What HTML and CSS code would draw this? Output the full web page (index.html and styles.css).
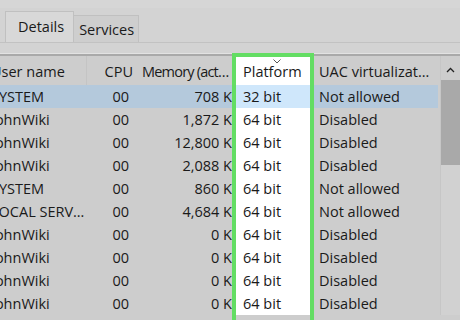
FILE: index.html
```html
<!DOCTYPE html>
<html lang="en">
<head>
    <meta charset="UTF-8">
    <title>Task Manager - Details</title>
    <link rel="stylesheet" href="styles.css">
</head>
<body>
    <div class="top">
        <div class="tabs">
            <div class="tab active">Details</div>
            <div class="tab">Services</div>
        </div>
    </div>
    <div class="list">
        <div class="grid" id="grid">
            <div class="cell head name">User name</div>
            <div class="cell head cpu">CPU</div>
            <div class="cell head mem">Memory (active private working set)</div>
            <div class="cell head plat">
                <svg class="sort" width="8" height="5" viewBox="0 0 8 5"><path d="M0.5 0.5 L4 4 L7.5 0.5" fill="none" stroke="#555" stroke-width="1"/></svg>
                Platform
            </div>
            <div class="cell head uac">UAC virtualization</div>
        </div>
        <div class="scrollbar">
            <div class="scroll-head">
                <svg width="9" height="6" viewBox="0 0 9 6"><path d="M1 5 L4.5 1.5 L8 5" fill="none" stroke="#222" stroke-width="1.3"/></svg>
            </div>
            <div class="thumb"></div>
        </div>
        <div class="highlight"></div>
    </div>

    <script>
        const rows = [
            ["SYSTEM", "00", "708 K", "32 bit", "Not allowed"],
            ["JohnWiki", "00", "1,872 K", "64 bit", "Disabled"],
            ["JohnWiki", "00", "12,800 K", "64 bit", "Disabled"],
            ["JohnWiki", "00", "2,088 K", "64 bit", "Disabled"],
            ["SYSTEM", "00", "860 K", "64 bit", "Not allowed"],
            ["LOCAL SERVICE", "00", "4,684 K", "64 bit", "Not allowed"],
            ["JohnWiki", "00", "0 K", "64 bit", "Disabled"],
            ["JohnWiki", "00", "0 K", "64 bit", "Disabled"],
            ["JohnWiki", "00", "0 K", "64 bit", "Disabled"],
            ["JohnWiki", "00", "0 K", "64 bit", "Disabled"]
        ];
        const cols = ["name", "cpu", "mem", "plat", "uac"];
        const grid = document.getElementById("grid");

        rows.forEach((row, i) => {
            row.forEach((text, c) => {
                let cell = document.createElement("div");
                cell.classList.add("cell", cols[c]);
                if (i === 0) cell.classList.add("selected");
                cell.textContent = text;
                grid.appendChild(cell);
            });
        });
    </script>
</body>
</html>
```

FILE: styles.css
```css
body {
    font-family: "Open Sans", sans-serif;
    font-size: 14.5px;
    color: #1a1a1a;
    margin: 0;
    padding: 0;
    background-color: #cdcdcd;
    width: 460px;
    height: 320px;
    overflow: hidden;
}
.top {
    height: 56px;
    background-color: #d3d3d3;
    border-top: 8px solid #d6d6d6;
    box-sizing: border-box;
    border-bottom: 2px solid #a9a9a9;
    box-shadow: 0 -1px 0 #e2e2e2 inset;
}
.tabs {
    display: flex;
    align-items: flex-end;
    padding-left: 5px;
    height: 34px;
    border-bottom: 1px solid #c2c2c2;
}
.tab {
    height: 26px;
    padding: 0 4px 0 5px;
    line-height: 28px;
    background-color: #cecece;
    border: 1px solid #c0c0c0;
    border-bottom: none;
    border-left: none;
}
.tab.active {
    height: 30px;
    line-height: 29px;
    padding: 0 9px 0 12px;
    background-color: #d8d8d8;
    border-left: 1px solid #c0c0c0;
}
.list {
    position: relative;
    display: flex;
}
.grid {
    display: grid;
    grid-template-columns: 101px 50px 95px 82px 124px;
    grid-template-rows: 29px;
    grid-auto-rows: 23px;
    margin-left: -14px;
    width: 454px;
}
.cell {
    white-space: nowrap;
    overflow: hidden;
    text-overflow: ellipsis;
    line-height: 23px;
}
.head {
    line-height: 27px;
    padding-top: 2px;
}
.head.name {
    border-right: 1px solid #c4c4c4;
}
.name {
    padding-left: 5px;
}
.cpu {
    text-align: right;
    padding-right: 8px;
}
.head.cpu {
    padding-right: 4px;
}
.mem {
    text-align: right;
}
.head.mem {
    text-align: left;
    padding-left: 5px;
    letter-spacing: -0.8px;
}
.plat {
    padding-left: 11px;
    background-color: #fff;
    position: relative;
}
.uac {
    padding-left: 5px;
    padding-right: 8px;
}
.sort {
    position: absolute;
    left: 41px;
    top: 3px;
}
.selected {
    background-color: #b4c9dc;
}
.plat.selected {
    background-color: #cfe7fb;
}
.scrollbar {
    width: 20px;
    flex: none;
    background-color: #d1d1d1;
    border-left: 1px solid #c6c6c6;
    box-sizing: border-box;
}
.scroll-head {
    height: 24px;
    display: flex;
    justify-content: center;
    padding-top: 11px;
    box-sizing: border-box;
    background-color: #cdcdcd;
}
.thumb {
    height: 85px;
    background-color: #a9a9a9;
}
.highlight {
    position: absolute;
    left: 232px;
    top: -3px;
    width: 82px;
    height: 280px;
    box-sizing: border-box;
    border: 4px solid #63dd63;
}
```
